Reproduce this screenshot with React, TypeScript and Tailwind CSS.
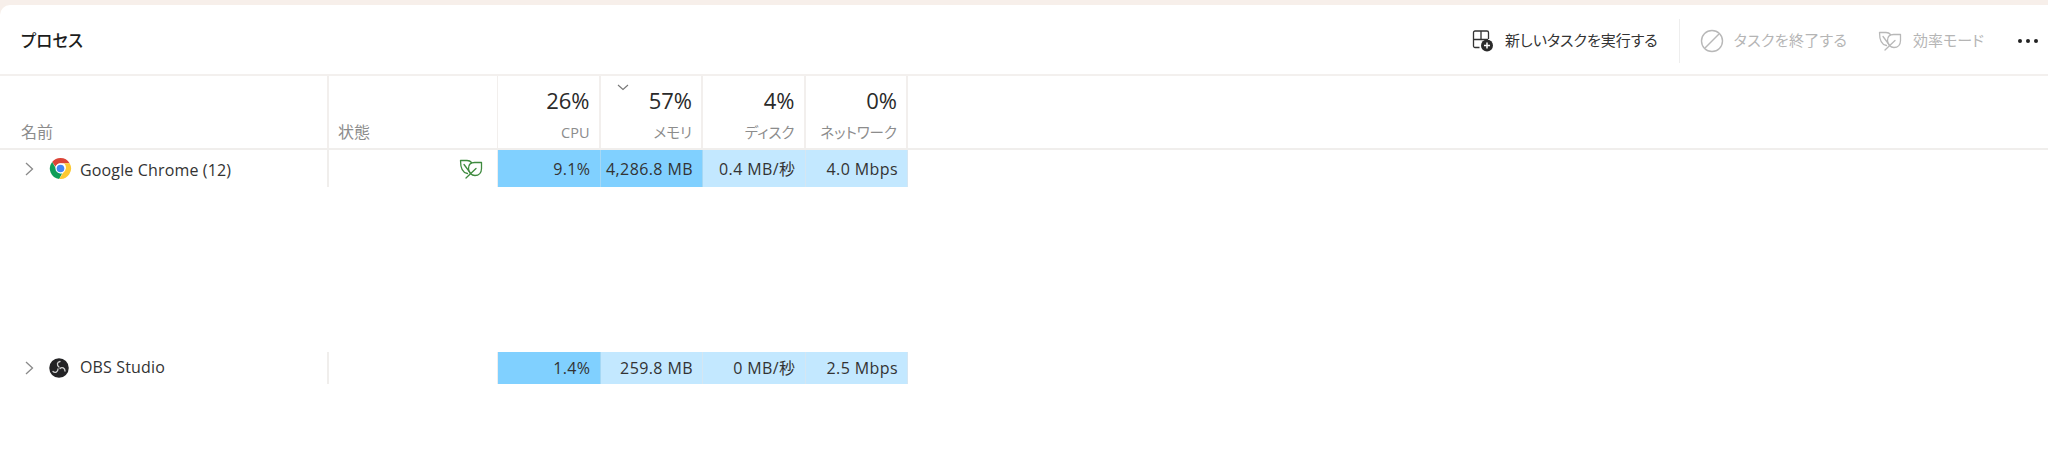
import type { ReactNode } from "react";

const FONT = "font-['Open_Sans','Noto_Sans_CJK_JP',sans-serif]";
const PALT = "[font-feature-settings:'palt']";

function ChromeIcon() {
  return (
    <svg width="23" height="23" viewBox="0 0 48 48" className="shrink-0">
      <path d="M24 2a22 22 0 0 1 19.05 11H24a11 11 0 0 0-10.4 7.4L6.6 10.2A22 22 0 0 1 24 2z" fill="#db4437" />
      <path d="M6.6 10.2l9.6 16.6A9.5 9.5 0 0 0 27.6 34l-6.3 11.8A22 22 0 0 1 6.6 10.2z" fill="#0f9d58" />
      <path d="M43.05 13A22 22 0 0 1 21.3 45.8L31.5 29A10 10 0 0 0 31 13z" fill="#fcc934" />
      <circle cx="24" cy="24" r="10.5" fill="#fff" />
      <circle cx="24" cy="24" r="8" fill="#4285f4" />
    </svg>
  );
}

function ObsIcon() {
  return (
    <svg width="20" height="20" viewBox="0 0 40 40" className="shrink-0">
      <circle cx="20" cy="20" r="19.5" fill="#232325" />
      <g fill="none" stroke="#cfcfcf" strokeWidth="2.6" strokeLinecap="round">
        <path d="M20 18C15 14 16 8 22 7" />
        <path d="M22 21C26 17 32 20 32 26" />
        <path d="M18 22C18 28 12 31 8 27" />
      </g>
    </svg>
  );
}

function LeafIcon({ color }: { color: string }) {
  return (
    <svg width="24" height="20" viewBox="0 0 24 20" fill="none" stroke={color} strokeWidth="1.3" strokeLinejoin="round" strokeLinecap="round" className="shrink-0">
      <path d="M8.5 14.5C4 14 1.5 10 1.5 1.5H8c2 0 3.5 .7 4.5 2" />
      <path d="M22.5 3.5H15.5C11.5 3.5 9.5 6 9.5 9.5C9.5 13.5 12.5 16.5 16 16.5C20 16.5 22.5 13.5 22.5 9.5z" />
      <path d="M5 5.5l6 8M17 9.5L7 19" />
    </svg>
  );
}

function NewTaskIcon() {
  return (
    <svg width="22" height="22" viewBox="0 0 22 22" fill="none" className="shrink-0">
      <path d="M7.5 17.5H3a1.5 1.5 0 0 1-1.5-1.5V2.5A1.5 1.5 0 0 1 3 1h12a1.5 1.5 0 0 1 1.5 1.5V9M1.5 9.5h7M9 1v8.5h7" stroke="#333" strokeWidth="1.3" />
      <circle cx="15" cy="15.5" r="6" fill="#2b2b2b" />
      <path d="M15 12.5v6M12 15.5h6" stroke="#fff" strokeWidth="1.5" />
    </svg>
  );
}

function BlockIcon() {
  return (
    <svg width="24" height="24" viewBox="0 0 24 24" fill="none" stroke="#b8b8b8" strokeWidth="1.4" className="shrink-0">
      <circle cx="12" cy="12" r="10.5" />
      <path d="M5 19L19 5" />
    </svg>
  );
}

function Chevron() {
  return (
    <svg width="9" height="14" viewBox="0 0 9 14" fill="none" stroke="#8a8a8a" strokeWidth="1.3" className="ml-[25px] mr-[15px] shrink-0">
      <path d="M1 1l6.5 6L1 13" />
    </svg>
  );
}

function HeadCell({ pct, label, sorted }: { pct: string; label: string; sorted?: boolean }) {
  return (
    <div className="relative w-[102.5px] shrink-0 border-r-2 border-[#f2efed] pr-[9px] text-right">
      {sorted && (
        <svg width="12" height="7" viewBox="0 0 12 7" fill="none" stroke="#777" strokeWidth="1.1" className="absolute left-[16px] top-[8px]">
          <path d="M1 1l5 4.5L11 1" />
        </svg>
      )}
      <div className="mt-[10px] text-[22px] leading-[28px] text-[#2a2a2a]">{pct}</div>
      <div className={`mt-[9px] text-[14.5px] leading-[20px] text-[#8c8c8c] ${PALT}`}>{label}</div>
    </div>
  );
}

function DataCell({ value, bg, line }: { value: string; bg: string; line: string }) {
  return (
    <div className={`flex w-[102.5px] shrink-0 items-center justify-end border-r pr-[9px] text-[16px] tracking-[0.4px] text-[#333] ${bg} ${line}`}>
      {value}
    </div>
  );
}

type Cell = { value: string; bg: string; line: string };

const HOT = { bg: "bg-[#80d0ff]", line: "border-[#a5d8f5]" };
const COOL = { bg: "bg-[#c3e8ff]", line: "border-[#d5e6f2]" };

function Row({ name, icon, height, nudge, status, cells }: { name: string; icon: ReactNode; height: string; nudge: string; status?: ReactNode; cells: Cell[] }) {
  return (
    <div className={`flex ${height}`}>
      <div className="flex w-[329px] shrink-0 items-center border-r-2 border-[#f0eeec]">
        <Chevron />
        <div className="flex w-[31px] shrink-0 items-center">{icon}</div>
        <span className={`text-[16px] tracking-[0.15px] text-[#333] ${nudge}`}>{name}</span>
      </div>
      <div className="flex w-[169px] shrink-0 items-center justify-end border-r border-[#eeeeee] pr-[14px]">{status}</div>
      {cells.map((c) => (
        <DataCell key={c.value} {...c} />
      ))}
    </div>
  );
}

export default function App() {
  return (
    <div className={`h-[472px] w-[2048px] overflow-hidden bg-[#f7efea] pt-[5px] ${FONT}`}>
      <div className="h-full rounded-tl-[10px] bg-white">
        <div className="flex h-[71px] items-center justify-between border-b-2 border-[#f3f0ee] pl-[21px] pr-[10px]">
          <h1 className={`pt-[4px] text-[16.5px] font-medium text-[#1c1c1c] ${PALT}`}>プロセス</h1>
          <div className={`flex items-center pt-[2px] text-[15px] ${PALT}`}>
            <div className="flex items-center gap-[11px] pr-[21px] text-[#333]">
              <NewTaskIcon />
              <span>新しいタスクを実行する</span>
            </div>
            <div className="h-[44px] w-px bg-[#eeeeee]" />
            <div className="ml-[20px] flex items-center gap-[10px] text-[#b5b5b5]">
              <BlockIcon />
              <span className="tracking-[0.3px]">タスクを終了する</span>
            </div>
            <div className="ml-[31px] flex items-center gap-[11px] text-[#b5b5b5]">
              <LeafIcon color="#b8b8b8" />
              <span>効率モード</span>
            </div>
            <div className="ml-[34px] flex items-center gap-[4px]">
              <span className="size-[4px] rounded-full bg-[#222]" />
              <span className="size-[4px] rounded-full bg-[#222]" />
              <span className="size-[4px] rounded-full bg-[#222]" />
            </div>
          </div>
        </div>

        <div className="flex h-[74px] border-b-2 border-[#f0eeec]">
          <div className="flex w-[329px] shrink-0 items-end border-r-2 border-[#f2efed] pb-[4px] pl-[21px] text-[16px] text-[#8c8c8c]">名前</div>
          <div className="flex w-[169px] shrink-0 items-end border-r border-[#f2efed] pb-[4px] pl-[9px] text-[16px] text-[#8c8c8c]">状態</div>
          <HeadCell pct="26%" label="CPU" />
          <HeadCell pct="57%" label="メモリ" sorted />
          <HeadCell pct="4%" label="ディスク" />
          <HeadCell pct="0%" label="ネットワーク" />
        </div>

        <Row
          name="Google Chrome (12)"
          icon={<ChromeIcon />}
          height="h-[37px]"
          nudge="pt-[2px]"
          status={<LeafIcon color="#3e8a3e" />}
          cells={[
            { value: "9.1%", ...HOT },
            { value: "4,286.8 MB", ...HOT },
            { value: "0.4 MB/秒", ...COOL },
            { value: "4.0 Mbps", ...COOL },
          ]}
        />
        <div className="h-[165px]" />
        <Row
          name="OBS Studio"
          icon={<ObsIcon />}
          height="h-[32px]"
          nudge="pb-[2px]"
          cells={[
            { value: "1.4%", ...HOT },
            { value: "259.8 MB", ...COOL },
            { value: "0 MB/秒", ...COOL },
            { value: "2.5 Mbps", ...COOL },
          ]}
        />
      </div>
    </div>
  );
}
